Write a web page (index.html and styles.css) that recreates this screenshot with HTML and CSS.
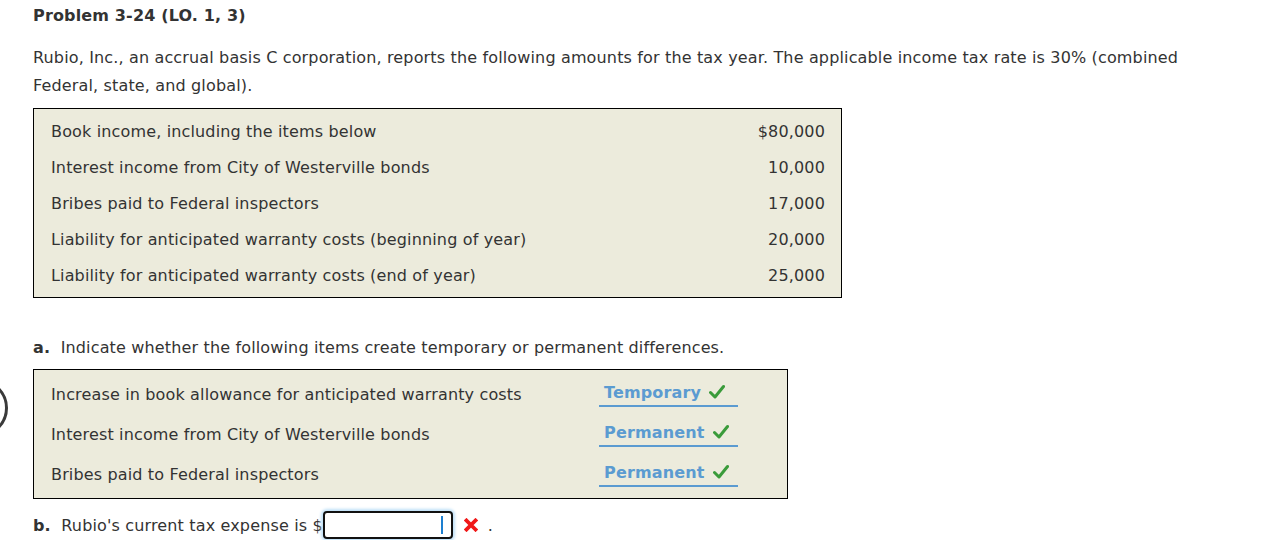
FILE: index.html
```html
<!DOCTYPE html>
<html>
<head>
<meta charset="utf-8">
<link rel="stylesheet" href="styles.css">
</head>
<body>
<div class="side-circle"></div>
<div class="page">
  <div class="title">Problem 3-24 (LO. 1, 3)</div>
  <p class="intro">Rubio, Inc., an accrual basis C corporation, reports the following amounts for the tax year. The applicable income tax rate is 30% (combined Federal, state, and global).</p>
  <div class="data-box">
    <div class="row"><span>Book income, including the items below</span><span>$80,000</span></div>
    <div class="row"><span>Interest income from City of Westerville bonds</span><span>10,000</span></div>
    <div class="row"><span>Bribes paid to Federal inspectors</span><span>17,000</span></div>
    <div class="row"><span>Liability for anticipated warranty costs (beginning of year)</span><span>20,000</span></div>
    <div class="row"><span>Liability for anticipated warranty costs (end of year)</span><span>25,000</span></div>
  </div>
  <p class="question"><b>a.</b>&nbsp; Indicate whether the following items create temporary or permanent differences.</p>
  <div class="answer-box">
    <div class="arow"><span class="label">Increase in book allowance for anticipated warranty costs</span><span class="answer">Temporary <svg class="check" viewBox="0 0 16 16" width="16" height="16"><path d="M1.5 8.5 L6 13 L14.5 2.5" fill="none" stroke="#3a9b3a" stroke-width="3" stroke-linecap="round" stroke-linejoin="round"/></svg></span></div>
    <div class="arow"><span class="label">Interest income from City of Westerville bonds</span><span class="answer">Permanent <svg class="check" viewBox="0 0 16 16" width="16" height="16"><path d="M1.5 8.5 L6 13 L14.5 2.5" fill="none" stroke="#3a9b3a" stroke-width="3" stroke-linecap="round" stroke-linejoin="round"/></svg></span></div>
    <div class="arow"><span class="label">Bribes paid to Federal inspectors</span><span class="answer">Permanent <svg class="check" viewBox="0 0 16 16" width="16" height="16"><path d="M1.5 8.5 L6 13 L14.5 2.5" fill="none" stroke="#3a9b3a" stroke-width="3" stroke-linecap="round" stroke-linejoin="round"/></svg></span></div>
  </div>
  <div class="part-b"><b>b.</b>&nbsp; Rubio's current tax expense is $<span class="input"><span class="caret"></span></span><svg class="xmark" viewBox="0 0 14 14" width="14" height="14"><path d="M2.5 2.5 L11.5 11.5 M11.5 2.5 L2.5 11.5" stroke="#f01818" stroke-width="3.8" stroke-linecap="square"/></svg><span class="dot">.</span></div>
</div>
</body>
</html>
```
FILE: styles.css
```css
html, body {
  margin: 0;
  padding: 0;
  background: #ffffff;
}
body {
  font-family: "DejaVu Sans", Verdana, sans-serif;
  font-size: 16px;
  letter-spacing: 0.15px;
  color: #333333;
  position: relative;
  overflow: hidden;
}
.page {
  padding-left: 33px;
  padding-top: 5px;
}
.title {
  font-weight: bold;
  line-height: 22px;
  color: #333;
}
.intro {
  margin: 17px 0 0 0;
  line-height: 28px;
  width: 1180px;
}
.data-box {
  margin-top: 8px;
  width: 774px;
  background: #ecebdc;
  border: 1px solid #000;
  padding: 4px 16px 4px 17px;
}
.row {
  display: flex;
  justify-content: space-between;
  height: 36px;
  align-items: center;
}
.question {
  margin: 37px 0 0 0;
  line-height: 26px;
}
.answer-box {
  margin-top: 8px;
  width: 720px;
  background: #ecebdc;
  border: 1px solid #000;
  padding: 4px 16px 4px 17px;
}
.arow {
  display: flex;
  align-items: center;
  height: 40px;
}
.label {
  width: 548px;
}
.answer {
  display: inline-flex;
  align-items: center;
  width: 139px;
  box-sizing: border-box;
  padding-left: 5px;
  height: 28px;
  margin-top: -2px;
  border-bottom: 2px solid #5b9bd1;
  color: #5b9bd1;
  font-weight: bold;
}
.check {
  margin-left: 8px;
}
.part-b {
  margin-top: 11px;
  display: flex;
  align-items: center;
  height: 30px;
}
.input {
  display: inline-block;
  width: 126px;
  height: 24px;
  border: 2px solid #111;
  border-radius: 4px;
  background: #fff;
  box-shadow: 0 0 3px 2px #bfe0f7;
  position: relative;
}
.caret {
  position: absolute;
  right: 8px;
  top: 3px;
  width: 2px;
  height: 18px;
  background: #1d7fd0;
}
.xmark {
  margin-left: 11px;
}
.dot {
  margin-left: 10px;
}
.side-circle {
  position: absolute;
  left: -50px;
  top: 379px;
  width: 52px;
  height: 52px;
  border: 3px solid #3a3a3a;
  border-radius: 50%;
}
```
